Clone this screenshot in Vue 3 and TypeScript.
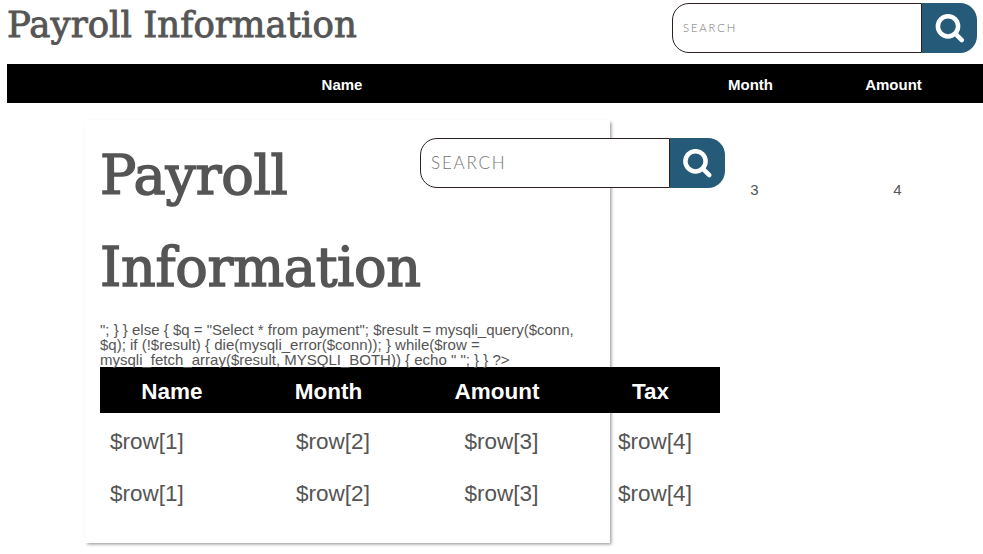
<script setup lang="ts">
const outerColumns: string[] = ['Name', 'Month', 'Amount']
const innerColumns: string[] = ['Name', 'Month', 'Amount', 'Tax']
const rows: string[][] = [
  ['$row[1]', '$row[2]', '$row[3]', '$row[4]'],
  ['$row[1]', '$row[2]', '$row[3]', '$row[4]'],
]
const code: string[] = [
  '"; } } else { $q = "Select * from payment"; $result = mysqli_query($conn,',
  '$q); if (!$result) { die(mysqli_error($conn)); } while($row =',
  'mysqli_fetch_array($result, MYSQLI_BOTH)) { echo " "; } } ?>',
]
</script>

<template>
  <main class="page">
    <header class="top">
      <h1 class="title"><span>Payroll Information</span></h1>
      <form class="search" @submit.prevent>
        <input type="text" placeholder="SEARCH" aria-label="Search" />
        <button type="submit" aria-label="Submit search">
          <svg viewBox="0 0 30 30"><circle cx="13" cy="12.3" r="10.1" /><path d="M20.3 19.6 26.8 26.1" /></svg>
        </button>
      </form>
    </header>
    <div class="outer-head">
      <span v-for="c in outerColumns" :key="c">{{ c }}</span>
    </div>
    <div class="outer-row">
      <section class="card">
        <div class="card-top">
          <h2 class="title large"><span>Payroll</span><span>Information</span></h2>
          <form class="search big" @submit.prevent>
            <input type="text" placeholder="SEARCH" aria-label="Search" />
            <button type="submit" aria-label="Submit search">
              <svg viewBox="0 0 30 30"><circle cx="12.5" cy="12.3" r="10.1" /><path d="M19.8 19.6 26.3 26.1" /></svg>
            </button>
          </form>
        </div>
        <p class="code"><span v-for="line in code" :key="line">{{ line }}</span></p>
        <div class="table">
          <div class="row head"><span v-for="c in innerColumns" :key="c">{{ c }}</span></div>
          <div v-for="(r, i) in rows" :key="i" class="row"><span v-for="c in r" :key="c">{{ c }}</span></div>
        </div>
      </section>
      <span class="value">3</span>
      <span class="value">4</span>
    </div>
  </main>
</template>

<style>
body {
  margin: 0;
  overflow: hidden;
  background: #fff;
}
</style>

<style scoped>
* {
  box-sizing: border-box;
}
.page {
  height: 554px;
  padding-left: 7px;
  overflow: hidden;
  color: #555;
  font: 15px/15px "Liberation Sans", Arial, sans-serif;
}
.top {
  display: flex;
  justify-content: space-between;
  height: 64px;
  padding: 3px 6px 0 0;
}
.title {
  margin: 0;
  font: 500 35.5px/44px "Roboto Slab", "DejaVu Serif", serif;
  letter-spacing: 0.05px;
  white-space: nowrap;
  -webkit-text-stroke: 0.9px #555;
}
.title span {
  display: block;
  width: max-content;
}
.large {
  width: 320px;
  flex: none;
  font-size: 54px;
  line-height: 92px;
  letter-spacing: -0.3px;
  -webkit-text-stroke-width: 1.5px;
}
.search {
  display: flex;
  flex: none;
  width: 305px;
  height: 50px;
}
.search input {
  width: 250px;
  height: 50px;
  padding: 0 10px 2px;
  border: 1px solid #2d2021;
  border-radius: 17px 0 0 17px;
  outline: 0;
  background: #fff;
  font: 300 11.25px Lato, sans-serif;
  letter-spacing: 1.9px;
}
.search input::placeholder {
  color: #757575;
  opacity: 1;
}
.search.big input {
  font-size: 17px;
  letter-spacing: 1.8px;
}
.search button {
  width: 55px;
  height: 50px;
  padding: 0;
  border: 0;
  border-radius: 0 17px 17px 0;
  background: #255a78;
}
.search svg {
  display: block;
  width: 30px;
  height: 30px;
  margin: 1px 0 0 13px;
  fill: none;
  stroke: #fff;
  stroke-width: 4.5;
  stroke-linecap: round;
}
.outer-head,
.outer-row {
  display: grid;
  grid-template-columns: 670px 147px 139px;
}
.outer-head {
  height: 39px;
  align-items: center;
  padding-top: 1px;
  background: #000;
  color: #fff;
  font-weight: bold;
  text-align: center;
}
.outer-row {
  height: 451px;
}
.value {
  padding: 79px 0 0 8px;
  text-align: center;
}
.card {
  width: 525px;
  height: 423px;
  margin: 17px 0 0 78px;
  padding: 10px 15px;
  box-shadow: 1px 1px 3px rgba(0, 0, 0, 0.08), 1.5px 1.5px 3px rgba(0, 0, 0, 0.33);
}
.card-top {
  display: flex;
  height: 192px;
}
.card-top .search {
  margin-top: 8px;
}
.code {
  height: 45px;
  margin: 0;
  position: relative;
  white-space: nowrap;
}
.code span {
  display: block;
}
.table {
  width: 620px;
}
.row {
  display: grid;
  grid-template-columns: 144px 169px 168px 139px;
  height: 52px;
  align-items: center;
  padding-top: 5px;
  font-size: 22.5px;
  line-height: 26px;
}
.row span {
  text-align: center;
}
.row:not(.head) span:first-child {
  padding-left: 10px;
  text-align: left;
}
.row:not(.head) span:nth-child(n + 2) {
  padding-left: 9px;
}
.row.head {
  height: 46px;
  padding-top: 3px;
  background: #000;
  color: #fff;
  font-weight: bold;
}
</style>
